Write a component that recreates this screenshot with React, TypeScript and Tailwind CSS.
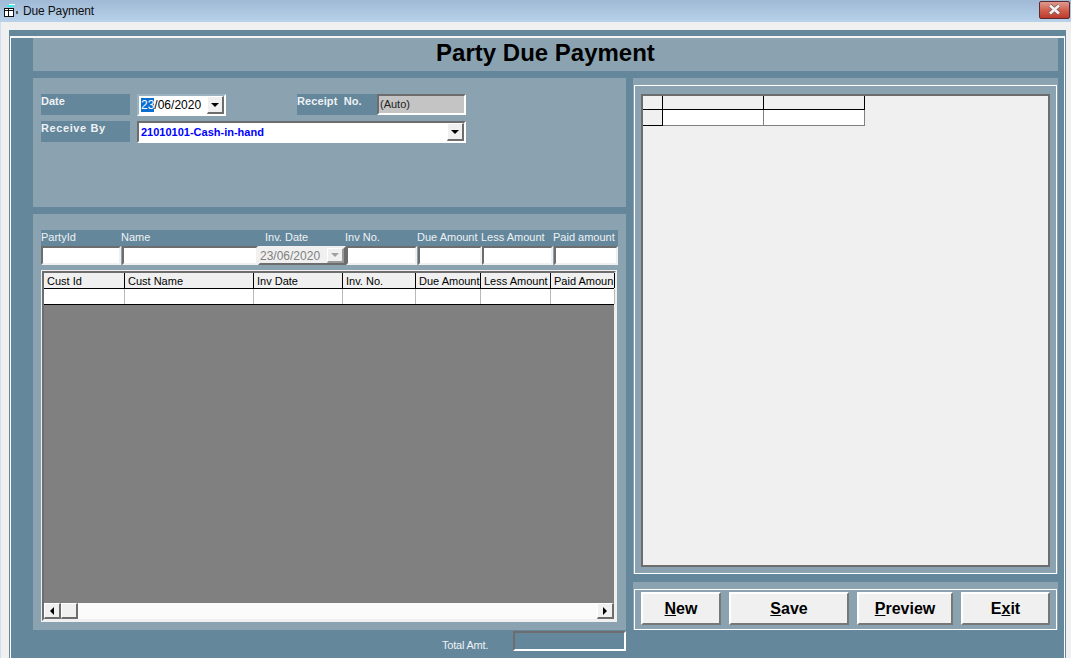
import React from 'react';

const FONT = "font-['Liberation_Sans',Arial,sans-serif]";

const FILTER_LABELS = [
  { text: 'PartyId', w: 'w-[80px]' },
  { text: 'Name', w: 'w-[144px]' },
  { text: 'Inv. Date', w: 'w-[80px]' },
  { text: 'Inv No.', w: 'w-[72px]' },
  { text: 'Due Amount', w: 'w-[64px]' },
  { text: 'Less Amount', w: 'w-[72px]' },
  { text: 'Paid amount', w: 'w-[65px]' },
];

const GRID_COLUMNS = [
  { text: 'Cust Id', w: 'w-[81px]' },
  { text: 'Cust Name', w: 'w-[129px]' },
  { text: 'Inv Date', w: 'w-[89px]' },
  { text: 'Inv. No.', w: 'w-[73px]' },
  { text: 'Due Amount', w: 'w-[65px]' },
  { text: 'Less Amount', w: 'w-[70px]' },
  { text: 'Paid Amoun', w: 'w-[64px]' },
];

const Arrow = ({ dir, color = '#000' }: { dir: 'down' | 'left' | 'right'; color?: string }) => {
  const points = dir === 'down' ? '0,0 8,0 4,4' : dir === 'left' ? '4,0 4,8 0,4' : '0,0 0,8 4,4';
  const size = dir === 'down' ? { width: 8, height: 4 } : { width: 4, height: 8 };
  return (
    <svg {...size}>
      <polygon points={points} fill={color} />
    </svg>
  );
};

const DropButton = ({ className = '', disabled = false }: { className?: string; disabled?: boolean }) => (
  <span
    className={`flex items-center justify-center bg-[#f0f0f0] border-t border-l border-t-white border-l-white border-r-2 border-b-2 border-r-[#6d6d6d] border-b-[#6d6d6d] ${className}`}
  >
    <Arrow dir="down" color={disabled ? '#a0a0a0' : '#000'} />
  </span>
);

// sunken win32 edit box
const Sunken = ({ className = '', children }: { className?: string; children?: React.ReactNode }) => (
  <div
    className={`flex items-center border-t-2 border-l-2 border-t-[#6d6d6d] border-l-[#6d6d6d] border-r-2 border-b-2 border-r-[#f0f0f0] border-b-[#f0f0f0] ${className}`}
  >
    {children}
  </div>
);

const FormButton = ({ w, pre = '', hot, post }: { w: string; pre?: string; hot: string; post: string }) => (
  <button
    type="button"
    className={`${w} h-[33px] shrink-0 bg-[#f0f0f0] border-t-2 border-l-2 border-t-white border-l-white border-r-2 border-b-2 border-r-[#777] border-b-[#777] text-[16px] font-bold text-black`}
  >
    {pre}
    <span className="underline">{hot}</span>
    {post}
  </button>
);

const Label = ({ className = '', children }: { className?: string; children: React.ReactNode }) => (
  <div className={`h-[21px] bg-[#64879b] text-[11px] leading-[14px] font-bold text-[#eef2f5] ${className}`}>
    {children}
  </div>
);

const ScrollButton = ({ className = '', children }: { className?: string; children?: React.ReactNode }) => (
  <div
    className={`w-[17px] h-4 flex items-center justify-center bg-[#f0f0f0] border-t border-l border-white border-r-2 border-b-2 border-r-[#6d6d6d] border-b-[#6d6d6d] ${className}`}
  >
    {children}
  </div>
);

export default function App() {
  return (
    <div className={`${FONT} w-[1071px] h-[658px] overflow-hidden flex flex-col bg-[#f0f0f0]`}>
      {/* Title bar */}
      <div className="h-[22px] shrink-0 flex items-center bg-gradient-to-b from-[#9fb9d6] to-[#b9d2ea]">
        <svg width="16" height="14" viewBox="0 0 16 14" className="ml-[3px]">
          <path d="M4 1h7v2H4z" fill="#3ee" />
          <path d="M6 0h6v1H6z" fill="#fff" />
          <rect x="1.5" y="4.5" width="9" height="8" fill="#fff" stroke="#111" />
          <path d="M1.5 6.5h9M5.5 4.5v8" stroke="#111" fill="none" />
          <rect x="13" y="7" width="2" height="3" fill="#555" />
        </svg>
        <span className="ml-[4px] text-[12px] tracking-[-0.15px] text-[#101010]">Due Payment</span>
        <div className="ml-auto mr-px mb-[3px] w-[31px] h-[18px] rounded-[2px] border border-[#5e2a30] flex items-center justify-center bg-gradient-to-b from-[#dd9a90] via-[#d2604f] to-[#bb3a2a]">
          <svg width="15" height="11" viewBox="0 0 15 11">
            <path d="M3 1.5l9 8M12 1.5l-9 8" stroke="#7a5a58" strokeWidth="4" fill="none" />
            <path d="M3 1.5l9 8M12 1.5l-9 8" stroke="#f2f2f2" strokeWidth="2.6" fill="none" />
          </svg>
        </div>
      </div>

      {/* Client area */}
      <div className="flex-1 min-h-0 pt-2 pl-[9px] pr-[5px] border-l border-[#cfe0f5]">
        <div className="h-full -ml-px bg-[#64879b] pt-[6px] pl-px pr-px">
          <div className="h-full border-t-2 border-t-[#f4f4f4] border-l border-r border-l-white border-r-white pl-[22px] pr-[6px]">
            {/* Heading */}
            <div className="h-[33px] pb-[3px] bg-[#8ba3b1] flex items-center justify-center text-[24px] font-bold text-black">
              Party Due Payment
            </div>

            <div className="mt-[7px] flex gap-[7px]">
              {/* Left column */}
              <div className="w-[593px]">
                <div className="h-[129px] bg-[#8ba3b1] pt-4 pl-2">
                  <div className="flex">
                    <Label className="w-[89px]">Date</Label>
                    <Sunken className="ml-[7px] w-[89px] h-[22px] !border-t-[#9db2bf] !border-l-[#9db2bf] !border-r-white !border-b-white">
                      <div className="flex-1 h-full bg-white flex items-center text-[12px] text-black">
                        <span className="bg-[#0a6fcf] text-white ml-[2px] leading-[14px]">23</span>/06/2020
                      </div>
                      <DropButton className="w-[17px] h-full" />
                    </Sunken>
                    <Label className="ml-[71px] w-[80px] tracking-[0.1px]">Receipt&nbsp; No.</Label>
                    <Sunken className="w-[89px] h-[21px] bg-[#c4c4c4] text-[11px] text-[#222] pl-px !border-r-white !border-b-white">
                      (Auto)
                    </Sunken>
                  </div>
                  <div className="flex mt-[5px]">
                    <Label className="w-[89px] tracking-[0.6px]">Receive By</Label>
                    <Sunken className="ml-[7px] w-[329px] h-[22px] bg-white !border-r-white !border-b-white">
                      <div className="flex-1 pl-[2px] text-[11px] font-bold text-[#0000ff]">21010101-Cash-in-hand</div>
                      <DropButton className="w-[17px] h-full" />
                    </Sunken>
                  </div>
                </div>

                <div className="mt-[7px] h-[416px] bg-[#8ba3b1] pt-4 pl-2">
                  {/* Filter labels */}
                  <div className="w-[577px] h-4 flex bg-[#64879b] text-[11px] leading-[15px] text-[#eef2f5]">
                    {FILTER_LABELS.map((col) => (
                      <div key={col.text} className={`${col.w} whitespace-nowrap`}>
                        {col.text}
                      </div>
                    ))}
                  </div>

                  {/* Filter inputs */}
                  <div className="w-[577px] h-[19px] flex">
                    <Sunken className="w-[80px] bg-white" />
                    <Sunken className="ml-px w-[136px] bg-white" />
                    <Sunken className="w-[88px] bg-[#f0f0f0] !border-t-[#f0f0f0] !border-l-[#f0f0f0] !border-r-[#6d6d6d] !border-b-[#6d6d6d] text-[12px] text-[#808080]">
                      <span className="flex-1">23/06/2020</span>
                      <DropButton disabled className="w-[17px] h-full !border-r-[#9a9a9a] !border-b-[#9a9a9a]" />
                    </Sunken>
                    <Sunken className="w-[71px] bg-white" />
                    <Sunken className="ml-px w-[64px] bg-white" />
                    <Sunken className="w-[71px] bg-white" />
                    <Sunken className="ml-px w-[64px] bg-white" />
                  </div>

                  {/* Data grid */}
                  <div className="mt-[5px] w-[576px] h-[352px] bg-[#f0f0f0] p-px">
                    <div className="h-[350px] border-2 border-[#6d6d6d] border-r-[#f0f0f0] border-b-[#f0f0f0] flex flex-col">
                      <div className="h-4 shrink-0 flex bg-[#f0f0f0] border-b border-black text-[11px] leading-[16px] text-black">
                        {GRID_COLUMNS.map((col) => (
                          <div key={col.text} className={`${col.w} shrink-0 whitespace-nowrap pl-[3px] border-r border-black`}>
                            {col.text}
                          </div>
                        ))}
                      </div>
                      <div className="h-4 shrink-0 flex bg-white border-b border-black">
                        {GRID_COLUMNS.map((col) => (
                          <div key={col.text} className={`${col.w} shrink-0 border-r border-[#b8b8b8]`} />
                        ))}
                      </div>
                      <div className="flex-1 bg-[#808080]" />
                      <div className="h-4 shrink-0 flex bg-[#fbfbfb]">
                        <ScrollButton>
                          <Arrow dir="left" />
                        </ScrollButton>
                        <ScrollButton />
                        <ScrollButton className="ml-auto">
                          <Arrow dir="right" />
                        </ScrollButton>
                      </div>
                    </div>
                  </div>
                </div>

                {/* Total */}
                <div className="flex items-start h-[20px] mt-px">
                  <span className="ml-[409px] mt-[7px] text-[11px] tracking-[-0.2px] leading-[14px] text-[#eef2f5]">Total Amt.</span>
                  <div className="ml-auto w-[113px] h-[20px] border-2 border-t-[#6d6d6d] border-l-[#6d6d6d] border-r-white border-b-white" />
                </div>
              </div>

              {/* Right column */}
              <div className="w-[425px]">
                <div className="h-[496px] bg-[#8ba3b1] pt-[7px] px-px">
                  <div className="h-[489px] border border-white pt-2 px-[6px]">
                    <div className="h-[473px] w-[409px] border-2 border-[#6d6d6d] bg-[#f0f0f0]">
                      <div className="flex h-[14px]">
                        <div className="w-5 border-r border-b border-black" />
                        <div className="w-[101px] border-r border-b border-black" />
                        <div className="w-[101px] border-r border-b border-black" />
                      </div>
                      <div className="flex h-4">
                        <div className="w-5 border-r border-b border-black" />
                        <div className="w-[101px] bg-white border-r border-b border-[#808080]" />
                        <div className="w-[101px] bg-white border-r border-b border-[#808080]" />
                      </div>
                    </div>
                  </div>
                </div>

                <div className="mt-2 h-[48px] bg-[#8ba3b1] pt-[7px]">
                  <div className="h-[41px] mx-px border border-white flex items-start pt-[2px] pl-[6px] gap-2">
                    <FormButton w="w-[80px]" hot="N" post="ew" />
                    <FormButton w="w-[120px]" hot="S" post="ave" />
                    <FormButton w="w-[96px]" hot="P" post="review" />
                    <FormButton w="w-[89px]" pre="E" hot="x" post="it" />
                  </div>
                </div>
              </div>
            </div>
          </div>
        </div>
      </div>
    </div>
  );
}
